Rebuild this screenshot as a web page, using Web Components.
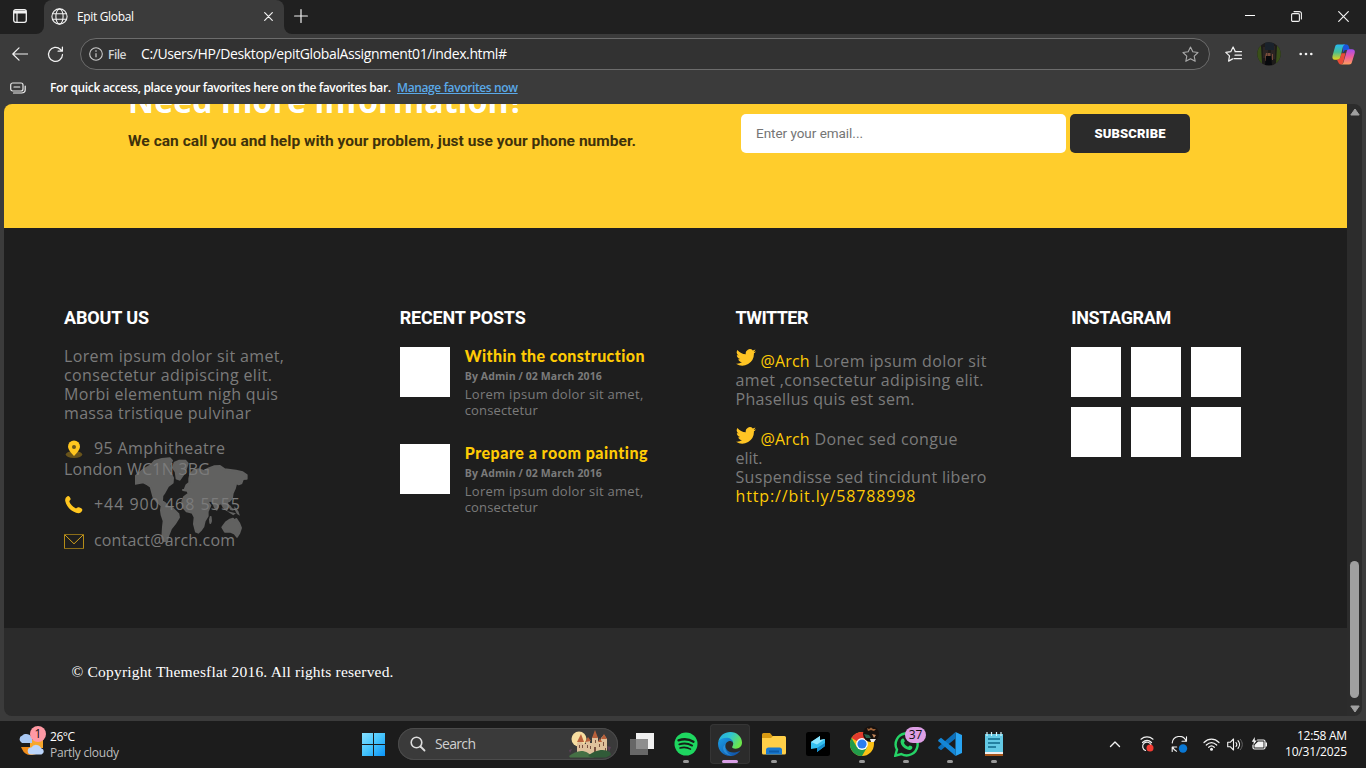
<!DOCTYPE html>
<html lang="en"><head><meta charset="utf-8"><title>Epit Global</title>
<style>html,body{margin:0;height:100%;overflow:hidden;background:#3b3b3b}body{font-family:"Open Sans","Noto Sans",sans-serif}</style></head>
<body><desktop-screen></desktop-screen>
<script>
const define=(name,html,css)=>customElements.define(name,class extends HTMLElement{
  connectedCallback(){ if(this.shadowRoot)return;
    const t=document.createElement('template');
    t.innerHTML=`<style>*{box-sizing:border-box}:host{display:block;box-sizing:border-box}${css}</style>${html}`;
    this.attachShadow({mode:'open'}).append(document.importNode(t.content,true)); }
});

/* A run of text whose tracking is set so that it spans a given width. */
customElements.define('fit-text',class extends HTMLElement{
  connectedCallback(){ if(this.shadowRoot)return;
    this.attachShadow({mode:'open'}).innerHTML='<style>:host{display:inline-block;white-space:pre;vertical-align:baseline}</style><span><slot></slot></span>';
    const s=this.shadowRoot.querySelector('span'),n=this.textContent.length,w=+this.getAttribute('w');
    s.style.letterSpacing='0';
    const ls=(w-s.getBoundingClientRect().width)/(n-1);
    s.style.letterSpacing=ls.toFixed(4)+'px'; this.style.marginRight=(-ls).toFixed(4)+'px';
  }
});

const svg=(w,h,vb,body)=>`<svg width="${w}" height="${h}" viewBox="${vb}" fill="none">${body}</svg>`;
const W='stroke="#f2f2f2" stroke-linecap="round" stroke-linejoin="round"';
const ICONS={
 workspace:svg(14,14,'0 0 14 14',`<rect x=".7" y=".7" width="12.6" height="12.6" rx="2" ${W} stroke-width="1.3"/><path d="M1 1.5h12v3H1z" fill="#f2f2f2"/><path d="M4 4v9" ${W} stroke-width="1.2"/>`),
 globe:svg(17,17,'0 0 17 17',`<g ${W} stroke-width="1.1"><circle cx="8.5" cy="8.5" r="7.6"/><ellipse cx="8.5" cy="8.5" rx="3.6" ry="7.6"/><path d="M1.6 5.8h13.8M1.6 11.2h13.8"/></g>`),
 close:svg(9,9,'0 0 9 9',`<path d="M.7.7l7.6 7.6M8.3.7L.7 8.3" ${W} stroke-width="1.2"/>`),
 plus:svg(14,14,'0 0 14 14',`<path d="M7 .6v12.8M.6 7h12.8" ${W} stroke-width="1.2"/>`),
 min:svg(10,10,'0 0 10 10',`<path d="M0 4.5h10" stroke="#fff"/>`),
 max:svg(11,11,'0 0 11 11',`<rect x=".6" y="2.6" width="7.8" height="7.8" rx="1.2" ${W} stroke-width="1.1"/><path d="M3 .6h5.4a2 2 0 0 1 2 2V8" ${W} stroke-width="1.1"/>`),
 winclose:svg(11,11,'0 0 11 11',`<path d="M.7.7l9.6 9.6M10.3.7L.7 10.3" ${W} stroke-width="1.2"/>`),
 back:svg(16,14,'0 0 16 14',`<path d="M7 .8L.8 7 7 13.2M1 7h14.5" ${W} stroke-width="1.2"/>`),
 reload:svg(17,17,'0 0 17 17',`<path d="M15.5 8.5a7 7 0 1 1-2-5l1.6 1.6M15.4 1v4.2h-4.3" ${W} stroke-width="1.25"/>`),
 info:svg(14,14,'0 0 14 14',`<circle cx="7" cy="7" r="6.3" stroke="#ccc" stroke-width="1.1"/><path d="M7 6.3v4" stroke="#ccc" stroke-width="1.2"/><circle cx="7" cy="4" r=".8" fill="#ccc"/>`),
 star:svg(17,17,'0 0 17 17',`<path d="M8.5 1l2.3 4.8 5.2.7-3.8 3.6 1 5.2-4.7-2.6-4.7 2.6 1-5.2L1 6.500l5.200-.7z" stroke="#aaa" stroke-width="1.1" stroke-linejoin="round"/>`),
 favs:svg(17,17,'0 0 17 17',`<path d="M10.300 5.5L8.100 1 5.800 5.700l-5 .7 3.700 3.500-.9 5.200 4-2.200M10 5.700h6.500M10 9.200h6.500M9 12.700h7.500" ${W} stroke-width="1.200"/>`),
 avatar:svg(24,24,'0 0 24 24',`<clipPath id="c"><circle cx="12" cy="12" r="11.700"/></clipPath><g clip-path="url(#c)"><path fill="#1d1b19" d="M0 0h24v24H0z"/><path fill="#3a5019" d="M0 4h4l1 17H0zM20 4h4v18h-5z"/><path fill="#2b2523" d="M6 5h5v11H6zM14 4h4v13h-4z"/><path fill="#1a222b" d="M8 0h9v8H8z"/><path fill="#784c3a" d="M8 15l1-4h1v8H8zM15 12h1v6h-1zM10.500 11h3v3h-3z"/><path fill="#07090c" d="M9 14h5l1 9H8z"/></g>`),
 dots:svg(14,4,'0 0 14 4',`<g fill="#f4f4f4"><circle cx="1.700" cy="2" r="1.300"/><circle cx="7" cy="2" r="1.300"/><circle cx="12.300" cy="2" r="1.300"/></g>`),
 copilot:svg(23,21,'0 0 23 21',`<defs><linearGradient id="a" x1="0" y1="0" x2="0" y2="1"><stop stop-color="#25b9f3"/><stop offset=".5" stop-color="#48bd92"/><stop offset="1" stop-color="#e8d218"/></linearGradient><linearGradient id="b" x1="0" y1="0" x2="0" y2="1"><stop stop-color="#a34cf0"/><stop offset=".5" stop-color="#ee5c9a"/><stop offset="1" stop-color="#ff9d5c"/></linearGradient></defs><path fill="#1a55dc" d="M11 .5h3.500c1.500 0 2 1 2.500 2.800l.8 2.700h-4c-2 0-2 2-3 3z"/><path fill="url(#a)" d="M5.500.5h8c-2 .3-2.500 2-3 4L8.500 13c-.6 2-1.500 2.800-3.300 2.800H3C.5 15.800 0 14 .6 11.500L3 3C3.500 1.200 4.300.5 5.500.5z"/><path fill="#e94b37" d="M5 15.800c2 0 3-1 3.500-3l1-3.500h4l-2 8c-.5 2-1 3.200-2.500 3.200-2 0-2.500-1.500-4-4.700z"/><path fill="url(#b)" d="M17 20.500H9c2-.3 2.500-2 3-4L14.500 8c.5-2 1.200-2.700 3-2.700H20c2.600 0 3.300 1.700 2.600 4.200L20 18c-.6 1.800-1.300 2.500-3 2.500z"/>`),
 favbar:svg(16,12,'0 0 16 12',`<rect x=".7" y="1" width="12.300" height="8" rx="2" stroke="#e8e8e8" stroke-width="1.200"/><path d="M4 5h5.700M3.500 11h8c2.500 0 3.700-1.200 3.700-3.200V4" ${W} stroke-width="1.200"/>`),
 up:svg(10,8,'0 0 10 8',`<path d="M5 1l4.200 6H.8z" fill="#a0a0a0" stroke="#a0a0a0" stroke-linejoin="round"/>`),
 down:svg(10,8,'0 0 10 8',`<path d="M5 7L.8 1h8.400z" fill="#a0a0a0" stroke="#a0a0a0" stroke-linejoin="round"/>`),
 pin:svg(20,20,'0 0 20 20',`<ellipse cx="10" cy="14.500" rx="8.300" ry="3.500" fill="#69541b"/><path d="M10 16S4 10.500 4 6.500a6 6 0 0 1 12 0C16 10.500 10 16 10 16z" fill="#ffc61f"/><circle cx="10" cy="7" r="2" fill="#69541b"/>`),
 phone:svg(20,20,'0 0 20 20',`<path d="M3.500 1.200c1.200-.8 2.200.3 3 2.300.7 1.700-1.700 2-1 3.600 1 2.300 3 4.500 5.700 6 1.500.8 2-1.500 3.700-.8 1.800.7 3.800 1.600 3.400 3-.8 2.800-3.800 3.400-6.300 2.400C6.300 15.500 2.500 11.500 1.300 6.300.8 4 1.800 2 3.500 1.200z" fill="#ffc61f"/>`),
 mail:svg(20,15,'0 0 20 15',`<path d="M.5.500h19v14H.5z" stroke="#b58c18"/><path d="M.5 14.500h19M.5.500h19" stroke="#8b6d18"/><path d="M1 1l9 8.800L19 1" stroke="#d1a11c"/>`),
 bird:svg(20,17,'0 0 24 20',`<path fill="#ffc524" d="M24 2.400a9.800 9.800 0 0 1-2.800.8A5 5 0 0 0 23.300.500a9.900 9.900 0 0 1-3.100 1.200 4.900 4.900 0 0 0-8.400 4.500A14 14 0 0 1 1.700 1a4.900 4.900 0 0 0 1.500 6.600A4.900 4.900 0 0 1 1 7c0 2.300 1.600 4.400 3.900 4.900a5 5 0 0 1-2.200.1 4.900 4.900 0 0 0 4.600 3.400A9.900 9.900 0 0 1 0 17.500 14 14 0 0 0 21.500 5c1-.7 1.800-1.600 2.500-2.600z"/>`),
 map:svg(113.300,85,'255 500 340 255',`<g fill="#616160" stroke="#616160" stroke-width="6" stroke-linejoin="round"><path d="M258 556l24-20 20-11 12-13 22-6 24-2 6 7-7 15 2 13-13 8 13-1 8 17-1 14-14 11-10 18-7 10-1 16 10 7 10 13 13 3 16 16 2 10-12 19-12 15-8 20-4 17-9 5-5-14 2-33 2-18-6-18-2-14 2-14-14-12-10-12-5-18-4-15-10-7-12-6-24 4z"/><path d="M374 517l14-6 18 0 7 8-5 16-9 19-10 14-9-3-3-21-8-12z"/><path d="M404 598l5-13 9-8 0-12 3-14 12-12 14-2 14 5 15-8 16-6 18-1 14 10 34 4 20 5 12 8 0 11-11 1-5 13-8 3-7-5-4 16-7 16-2 14-8 9-7 2 2 13-3 12-9-8-6-12-9 2-6 17-6-9-4-13-9-5-8 3 8 12-8 18 0 13-9 15-4 17-8 11-7 7-7-3-6-23 2-20-7-14-17-4-11-13-2-17 5-13 14-10-4-9-13-2z"/><path d="M482 680l1 12-2 6-1-10zM517 711l11-15 12-8 9-3 5 6 5-5 8 12 6 15-5 15-7 11-7-9-13-6-16 0z"/></g><g fill="#616160"><path d="M530 638l12 8 9 15-10-2zM553 648l12 14 5 14-9-5-7-13zM530 662l28 7-8 6z"/></g>`),
 weather:svg(30,28,'0 0 30 28',`<path d="M3 17h20a10 10 0 0 1-19 2z" fill="#ef8b18"/><path d="M12 10h13v8H12z" fill="#f7a72c"/><path d="M4 13a4 4 0 0 1 .3-7.500A6 6 0 0 1 14 8v5z" fill="#a9c8f4"/><path d="M13 24.500a3.500 3.500 0 0 1 .4-7 5.500 5.500 0 0 1 9.800.8 3.200 3.200 0 0 1 .3 6.200z" fill="#bcd5fa"/>`),
 start:svg(23,23,'0 0 23 23',`<defs><linearGradient id="w" gradientUnits="userSpaceOnUse" x1="0" y1="0" x2="23" y2="23"><stop stop-color="#86e0ff"/><stop offset=".5" stop-color="#45c4fc"/><stop offset="1" stop-color="#0a93f8"/></linearGradient></defs><path fill="url(#w)" d="M0 0h11v11H0zM12 0h11v11H12zM0 12h11v11H0zM12 12h11v11H12z"/>`),
 search:svg(16,16,'0 0 16 16',`<circle cx="6.500" cy="6.500" r="5.300" stroke="#ddd" stroke-width="1.600"/><path d="M10.500 10.500l4 4" stroke="#ddd" stroke-width="1.800" stroke-linecap="round"/>`),
 castle:svg(44,28,'0 0 44 28',`<circle cx="11" cy="9" r="7.500" fill="#f6dda0"/><path fill="#dfc19c" d="M9 24V13l3-2 3 2v1h3v-3h4v2h2V8l3-4 3 4v3h3V8l3-3 3 4v16z"/><path fill="#b9603a" d="M9 12l4-8 3 8zM24 8l3-8 3 8zM33 9l3-5 3 5zM17 12l3-5 3 4zM30 12l2-4 2 4z"/><path fill="#7a5140" d="M11 15h1v3h-1zM14 15h1v3h-1zM19 15h1v3h-1zM22 16h1v3h-1zM27 10h1v3h-1zM31 14h1v3h-1zM35 12h1v4h-1zM26 17h2v5h-2zM37 18h1v3h-1z"/><path fill="#457045" d="M1 26c6-4 12-7 19-3l6 4.500H2z"/><path fill="#315b38" d="M20 26c6-6 16-8 22-4l1 3-5 2.500H24z"/><path fill="#5b4058" d="M1 20l3-1-2 4zM39 16l4 1-2 5z"/>`),
 tasks:svg(24,23,'0 0 24 23',`<path d="M6 0h18v16H6z" fill="#f0f0f0"/><path d="M0 6h18v16H0z" fill="#777" opacity=".82"/>`),
 spotify:svg(24,24,'0 0 24 24',`<circle cx="12" cy="12" r="11.500" fill="#1ed760"/><g stroke="#162019" stroke-linecap="round"><path d="M4.500 8.300c5-1.600 11-1 15 1.400" stroke-width="2.300"/><path d="M5.300 12.300c4.300-1.300 9.300-.8 12.800 1.300" stroke-width="1.900"/><path d="M6 16c3.700-1.100 7.500-.6 10.500 1.200" stroke-width="1.500"/></g>`),
 edge:svg(24,24,'0 0 24 24',`<defs><linearGradient id="e" x1="0" y1="0" x2="1" y2=".5"><stop stop-color="#22a6e5"/><stop offset=".5" stop-color="#31c6cf"/><stop offset="1" stop-color="#6be54b"/></linearGradient><linearGradient id="f" x1="0" y1="0" x2="1" y2="1"><stop stop-color="#1b9de4"/><stop offset="1" stop-color="#0f4ba2"/></linearGradient></defs><path d="M.2 10C1.500 3.500 6.500 0 12.300 0 19 0 24 5 24 10.500c0 4-3 6.200-6.200 6.200-3 0-4.300-1.200-3.400-2.400 1.800-2.500.8-6.700-4.400-6.700-4 0-8 0-9.800 2.400z" fill="url(#e)"/><path d="M.2 10C1.700 7 5 5.700 8.500 5.700c3.500 0 6.500 2 6.700 5.300-1-1.700-3-2.300-4.600-1.700-3 1-4.300 4.700-2.200 8 2.600 4 9 4.200 13.900 1.200-2 3.500-6 5.500-10.300 5.500C5 24-1 18 .2 10z" fill="url(#f)"/><path d="M7.500 12c-1.500 4 1 10 6.500 11.500-7 .3-10-5.500-8.500-9z" fill="#3aa5ec" opacity=".5"/>`),
 folder:svg(24,24,'0 0 24 24',`<path d="M0 2.500Q0 1 1.500 1H8l2.500 3H22v5H0z" fill="#d89a12"/><path d="M0 6h9l2-2h11.500Q24 4 24 5.500V21q0 1.500-1.500 1.500h-21Q0 22.500 0 21z" fill="#ffcf48"/><path d="M4 22.500V18q0-2.500 2.500-2.500h11q2.500 0 2.500 2.500v4.500z" fill="#1979cf"/><path d="M7 18.500h10v2H7z" fill="#0b5ba9"/>`),
 prism:svg(24,24,'0 0 24 24',`<rect width="24" height="24" rx="2.500" fill="#000"/><path d="M5 10l9-6v4l5-1v7l-8 6v-4l-6 1z" fill="#35bff0"/><path d="M5 10l9-6v4l5-1-8 5.500z" fill="#8ee6ff"/><path d="M11 16l8-5v3l-8 6z" fill="#158dcb"/>`),
 chrome:svg(30,30,'0 0 30 30',`<circle cx="12" cy="18" r="12" fill="#fbc116"/><path d="M12 18L1.600 12A12 12 0 0 1 22.400 12z" fill="#e33b2e"/><path d="M12 18l-5.200 3L1.600 12A12 12 0 0 0 12 30l5.200-9z" fill="#229b4a"/><circle cx="12" cy="18" r="5.900" fill="#fff"/><circle cx="12" cy="18" r="4.600" fill="#2a7cef"/><circle cx="21" cy="8" r="8" fill="#17110e"/><path d="M17 2l2 1 2-1.500 2 1.500 3 0-2 2-3-1-3 1z" fill="#a16438"/><path d="M14 8l5 1 2 3-5 0z" fill="#2b624d"/><path d="M20 13l6 0-2 3h-3z" fill="#eee"/><path d="M22 8l4 1-2 3z" fill="#c88a5d"/>`),
 whatsapp:svg(25,25,'0 0 25 25',`<path d="M1.300 23.700l1.700-6A11 11 0 1 1 7.300 22z" stroke="#25d366" stroke-width="2.400"/><path d="M8.500 6.500c1.300-.4 1.500.2 2.300 2.500.2.800-1 1.500-.8 2 .8 1.800 2.200 3 4 3.800.6.200 1.200-1.400 1.900-1.200 2.200.9 2.700 1.300 2.400 2.300-.7 2-2.800 2.400-5 1.700C9.500 16.300 7 13.500 6.600 10.300 6.500 8.500 7.200 7 8.500 6.500z" fill="#25d366"/>`),
 vscode:svg(24,24,'0 0 24 24',`<path d="M17.500 0L24 3v18l-6.500 3z" fill="#28a4f2"/><path d="M17.500 0v6.500L3 18.200l-2.500-2q-.7-.7 0-1.400z" fill="#0c6fba"/><path d="M17.500 24v-6.500L3 5.800l-2.500 2q-.7.700 0 1.400z" fill="#1486d6"/>`),
 notepad:svg(18,24,'0 0 18 24',`<path d="M0 2h18v20H0z" fill="#63c9e4"/><path d="M0 20h18v2H0z" fill="#eee"/><path d="M0 22h18v2H0z" fill="#a75519"/><path d="M2 0v4M6.500 0v4M11.500 0v4M16 0v4" stroke="#d6f4fb" stroke-width="1.200"/><path d="M3 7h12M3 11h12M3 15h8" stroke="#11698b" stroke-width="1.600"/>`),
 chevron:svg(12,8,'0 0 12 8',`<path d="M1.500 6.500L6 2l4.500 4.500" ${W} stroke-width="1.400"/>`),
 cast:svg(16,16,'0 0 16 16',`<path d="M2 3.200c3.500-3 8.500-3 12 0M3.500 6.500c2.700-2.500 6.300-2.500 9 0M6.500 14.500A4.300 4.300 0 1 1 12 9" ${W} stroke-width="1.200"/><circle cx="11" cy="12" r="3.500" fill="#f23b32"/>`),
 sync:svg(17,17,'0 0 17 17',`<path d="M1.200 7A7.200 7.200 0 0 1 15 4.800M15.500.8v4.500H11M5.500 15.200A7 7 0 0 1 1.700 11M1.200 15.500V11h4.500" ${W} stroke-width="1.100"/><circle cx="12" cy="12.500" r="4.200" fill="#0a78d4"/>`),
 wifi:svg(17,13,'0 0 17 13',`<path d="M1 4.500c4.500-4.400 10.500-4.400 15 0M3.300 7c3.200-3 7.200-3 10.400 0M5.700 9.300c1.700-1.600 3.900-1.600 5.600 0" ${W} stroke-width="1.200"/><circle cx="8.500" cy="11.200" r="1.500" fill="#f2f2f2"/>`),
 sound:svg(16,13,'0 0 16 13',`<path d="M.7 4.300h2.500L6.500 1v11L3.200 8.700H.7zM9 4.500c1 1.200 1 2.800 0 4M11 2.700c2 2.300 2 5.300 0 7.600" ${W} stroke-width="1.100"/><path d="M13 1c3 3.300 3 7.700 0 11" stroke="#666"/>`),
 battery:svg(17,14,'0 0 17 14',`<path d="M6.500 3H12.500q1.500 0 1.500 1.500v6Q14 12 12.500 12H3.500Q2 12 2 10.500V8" ${W} stroke-width="1.200"/><path d="M3.500 10.500V8L7 4.500h5.500v6zM14.500 5.500H16v4h-1.500z" fill="#f2f2f2"/><path d="M3.700 0L.8 4.700h2L2.300 8 5.800 3.500h-2z" fill="#f2f2f2"/>`)
};
customElements.define('ui-icon',class extends HTMLElement{
  connectedCallback(){ if(!this.shadowRoot) this.attachShadow({mode:'open'}).innerHTML='<style>:host{display:inline-block;flex:none}svg{display:block}</style>'+ICONS[this.getAttribute('name')]; }
});

define('tab-strip',`<div class="ws"><ui-icon name="workspace"></ui-icon></div>
<div class="tab"><ui-icon name="globe"></ui-icon><span><fit-text w="57">Epit Global</fit-text></span><ui-icon name="close"></ui-icon></div>
<div class="rest"><ui-icon name="plus"></ui-icon><div class="win"><ui-icon name="min"></ui-icon><ui-icon name="max"></ui-icon><ui-icon name="winclose"></ui-icon></div></div>`,
`:host{display:flex;height:34px;background:linear-gradient(#202020 12px,#3b3b3b 12px)}.ws{width:44px;background:#202020;border-radius:0 0 8px 0;padding:9px 0 0 13px;line-height:0}
.tab{width:240px;display:flex;align-items:center;padding:0 11px 2px 7px;border-radius:8px 8px 0 0;background:#3b3b3b;color:#fff;font-size:12px}
.tab span{flex:1;padding-left:9px}.rest{flex:1;background:#202020;border-radius:0 0 0 8px;display:flex;justify-content:space-between;padding:9px 17px 0 10px}
.win{display:flex;gap:36px;padding-top:2px}`);

define('address-bar',`<ui-icon name="back"></ui-icon><ui-icon name="reload" class="r"></ui-icon>
<div class="pill"><ui-icon name="info"></ui-icon><b><fit-text w="18.500">File</fit-text></b><span><fit-text w="366">C:/Users/HP/Desktop/epitGlobalAssignment01/index.html#</fit-text></span><ui-icon name="star"></ui-icon></div>
<ui-icon name="favs" class="f"></ui-icon><ui-icon name="avatar" class="a"></ui-icon><ui-icon name="dots" class="d"></ui-icon><ui-icon name="copilot" class="c"></ui-icon>`,
`:host{display:flex;align-items:center;height:40px;padding-left:12px;background:#3b3b3b}.r{margin:0 17px 0 19px}
.pill{width:1130px;height:32px;margin-left:-1px;border:1px solid #6c6c6c;border-radius:16px;background:#323232;display:flex;align-items:center;padding:0 10px 0 8px;color:#fff;font-size:14px}
b{font-size:12px;font-weight:600;color:#d4d4d4;padding:0 0 0 5px;width:38px}span{flex:1;position:relative;padding:0 0 1px}
.f{margin-left:15px}.a{margin-left:15px}.d{margin-left:18px}.c{margin-left:19px}`);

define('favorites-bar',`<ui-icon name="favbar"></ui-icon><span><fit-text w="341">For quick access, place your favorites here on the favorites bar.</fit-text></span><a><fit-text w="121">Manage favorites now</fit-text></a>`,
`:host{display:flex;align-items:center;height:30px;padding:0 0 3px 10px;font:600 12px "Open Sans",sans-serif;color:#fff;background:#3b3b3b}span{padding-left:24px}a{padding-left:6px;color:#5aa9e8}a fit-text{text-decoration:underline}`);

define('call-to-action',`<div class="txt"><h2><fit-text w="396">Need more information?</fit-text></h2><p><fit-text w="508">We can call you and help with your problem, just use your phone number.</fit-text></p></div>
<div class="in"><fit-text w="107">Enter your email...</fit-text></div><div class="btn"><fit-text w="71">SUBSCRIBE</fit-text></div>`,
`:host{display:flex;height:124px;background:#ffcd2c;overflow:hidden;padding-left:124px}
.txt{width:613px}h2{margin:-27px 0 0;font:700 32px/48px "Open Sans",sans-serif;color:#fff;height:48px}
p{margin:5px 0 0;font:700 15.500px/22px Roboto,sans-serif;color:#3f320b}
.in{margin-top:10px;width:325px;height:39px;border-radius:5px;background:#fff;color:#757575;font:13.500px/39px Roboto,sans-serif;padding-left:15px}
.btn{margin:10px 0 0 4px;width:120px;height:39px;border-radius:5px;background:#2b2b2b;color:#fff;font:900 13px/39px Roboto,sans-serif;text-align:center}`);

define('footer-column',`<h3><slot name="title"></slot></h3><slot></slot>`,
`:host{position:relative;padding-left:60px;min-width:0}h3{margin:0 0 19px;height:20px;font:700 18px/20px Roboto,sans-serif;color:#fff}`);

define('about-panel',`<ui-icon name="map" class="map"></ui-icon><div class="body">
<div><fit-text w="220">Lorem ipsum dolor sit amet,</fit-text></div><div><fit-text w="208">consectetur adipiscing elit.</fit-text></div><div><fit-text w="214">Morbi elementum nigh quis</fit-text></div><div><fit-text w="187">massa tristique pulvinar</fit-text></div>
<div class="row a"><ui-icon name="pin"></ui-icon><fit-text w="131">95 Amphitheatre</fit-text></div><div class="l"><fit-text w="146">London WC1N 3BG</fit-text></div>
<div class="row p"><ui-icon name="phone"></ui-icon><fit-text w="146">+44 900 468 5555</fit-text></div><div class="row m"><ui-icon name="mail"></ui-icon><fit-text w="141">contact@arch.com</fit-text></div></div>`,
`:host{position:relative;font:16px/19px "Open Sans",sans-serif;color:#7b7b7b}.body{position:relative}.map{position:absolute;left:71px;top:110px;filter:blur(.5px)}
.row{display:flex;gap:10px;line-height:20px;height:20px}.a{margin-top:15px}.a ui-icon{padding-top:2px}.l{line-height:21px}.p{margin-top:14px}.m{margin-top:16px}.p ui-icon{margin-top:1px}.m ui-icon{padding-top:4px}.a{height:21px}`);

define('recent-post',`<div class="thumb"></div><div><h4><slot></slot></h4><p class="meta"><fit-text w="137">By Admin / 02 March 2016</fit-text></p><p><fit-text w="178.500">Lorem ipsum dolor sit amet,</fit-text></p><p><fit-text w="73">consectetur</fit-text></p></div>`,
`:host{display:flex;gap:15px;height:97px}.thumb{width:50px;height:50px;background:#fff}h4{margin:-1px 0 1px;font:900 16px/20px Lato,sans-serif;color:#ffcb05;height:20px}
p{margin:0;font:13px/16px "Open Sans",sans-serif;color:#7b7b7b}.meta{font:700 10.500px/16px "Open Sans",sans-serif;height:19px;padding-top:1px}`);

define('tweet-list',`<div class="top"><ui-icon name="bird"></ui-icon><a><fit-text w="49">@Arch</fit-text></a><fit-text w="172">Lorem ipsum dolor sit</fit-text></div>
<div><fit-text w="248">amet ,consectetur adipising elit.</fit-text></div><div><fit-text w="179">Phasellus quis est sem.</fit-text></div>
<div class="top t2"><ui-icon name="bird"></ui-icon><a><fit-text w="49">@Arch</fit-text></a><fit-text w="143">Donec sed congue</fit-text></div>
<div><fit-text w="27">elit.</fit-text></div><div><fit-text w="251">Suspendisse sed tincidunt libero</fit-text></div><div><a><fit-text w="180">http://bit.ly/58788998</fit-text></a></div>`,
`:host{font:16px/19px "Open Sans",sans-serif;color:#7b7b7b}.top{display:flex;gap:5px;padding-top:5px;height:24px}.top ui-icon{margin-top:-3px}.t2{margin-top:16px}a{color:#ffcb05}`);

define('photo-grid',`<i></i><i></i><i></i><i></i><i></i><i></i>`,`:host{display:grid;grid-template-columns:repeat(3,50px);gap:10px}i{height:50px;background:#fff}`);

define('site-footer',`<div class="cols">
<footer-column><fit-text slot="title" w="85">ABOUT US</fit-text><about-panel></about-panel></footer-column>
<footer-column><fit-text slot="title" w="126">RECENT POSTS</fit-text><recent-post><fit-text w="180">Within the construction</fit-text></recent-post><recent-post><fit-text w="183">Prepare a room painting</fit-text></recent-post></footer-column>
<footer-column><fit-text slot="title" w="73">TWITTER</fit-text><tweet-list></tweet-list></footer-column>
<footer-column><fit-text slot="title" w="100">INSTAGRAM</fit-text><photo-grid></photo-grid></footer-column></div>
<div class="copy"><fit-text w="322">© Copyright Themesflat 2016. All rights reserved.</fit-text></div>`,
`.cols{display:grid;grid-template-columns:repeat(4,1fr);height:400px;padding-top:80px;background:#1e1e1e}.copy{height:88px;background:#2b2b2b;padding:34px 0 0 67.500px;font:15.500px/20px "Liberation Serif",serif;color:#fff}`);

define('scroll-bar',`<ui-icon name="up"></ui-icon><div></div><ui-icon name="down"></ui-icon>`,
`:host{width:15px;background:#2c2c2c;display:flex;flex-direction:column;align-items:center;padding:4px 0 3px}div{width:9px;height:137px;border-radius:5px;background:#a0a0a0;margin:auto 0 7px}`);

define('task-button',`<slot></slot><b></b>`,`:host{position:relative;width:40px;height:40px;display:flex;align-items:center;justify-content:center;border-radius:4px;flex:none}
b{display:none}:host([run]) b{display:block;position:absolute;bottom:1px;left:17px;width:6px;height:3px;border-radius:2px;background:#999}
:host([active]){background:#2b2b2b;box-shadow:inset 0 0 0 1px #353535}:host([active]) b{left:12px;width:16px;background:#d99fe6}
::slotted(span){position:absolute;left:19px;top:3px;width:21px;height:16px;border-radius:8px;background:#dd9fe5;color:#111;font:12px/16px "Open Sans",sans-serif;text-align:center}`);

define('task-bar',`<div class="weather"><div class="wi"><ui-icon name="weather"></ui-icon><i>1</i></div><div class="wt"><div><fit-text w="25">26°C</fit-text></div><div class="g"><fit-text w="69">Partly cloudy</fit-text></div></div></div>
<div class="mid"><task-button><ui-icon name="start"></ui-icon></task-button><div class="search"><ui-icon name="search"></ui-icon><span><fit-text w="41">Search</fit-text></span><ui-icon name="castle"></ui-icon></div>
<task-button><ui-icon name="tasks"></ui-icon></task-button><task-button run><ui-icon name="spotify"></ui-icon></task-button><task-button run active><ui-icon name="edge"></ui-icon></task-button><task-button run><ui-icon name="folder"></ui-icon></task-button><task-button><ui-icon name="prism"></ui-icon></task-button><task-button run><ui-icon name="chrome" class="ch"></ui-icon></task-button><task-button run><ui-icon name="whatsapp"></ui-icon><span>37</span></task-button><task-button run><ui-icon name="vscode"></ui-icon></task-button><task-button run><ui-icon name="notepad"></ui-icon></task-button></div>
<div class="tray"><ui-icon name="chevron"></ui-icon><ui-icon name="cast" class="k"></ui-icon><ui-icon name="sync" class="s"></ui-icon><ui-icon name="wifi" class="w"></ui-icon><ui-icon name="sound" class="o"></ui-icon><ui-icon name="battery" class="b"></ui-icon></div>
<div class="clock"><div><fit-text w="50">12:58 AM</fit-text></div><div><fit-text w="62">10/31/2025</fit-text></div></div>`,
`:host{display:grid;grid-template-columns:353px 1fr auto 81px;height:47px;padding-bottom:1px;background:#1c1c1c;color:#fff;font:12px/16px "Open Sans",sans-serif;align-items:center}
.weather{display:flex;padding-left:18px;gap:2px}.wi{position:relative;padding-top:3px}.wt{padding-top:2px}i{position:absolute;left:12px;top:-1px;width:16px;height:16px;border-radius:8px;background:#ff99a4;color:#111;font-style:normal;text-align:center}.g{color:#bebebe}
.mid{display:flex;gap:4px;align-items:center}.search{width:220px;height:32px;margin-left:1px;border-radius:16px;background:#3a3a3a;box-shadow:inset 0 0 0 1px #4b4b4b;display:flex;align-items:center;padding:0 6px 0 12px;font-size:14px;color:#d0d0d0}.search span{flex:1;padding-left:9px}.ch{margin:-6px 0 0 6px}
.tray{display:flex;align-items:center;margin-right:17px}.k{margin-left:18px}.s{margin-left:16px}.w{margin-left:15px}.o{margin-left:7px}.b{margin-left:8px}.clock{text-align:right;padding-right:19px}`);

define('desktop-screen',`<tab-strip></tab-strip><address-bar></address-bar><favorites-bar></favorites-bar>
<div class="view"><div class="page"><call-to-action></call-to-action><site-footer></site-footer></div><scroll-bar></scroll-bar></div><task-bar></task-bar>`,
`:host{width:1366px;height:768px;overflow:hidden;background:#3b3b3b}.view{display:flex;height:612px;margin:0 4px 5px;border-radius:8px;overflow:hidden}.page{width:1343px}`);
</script></body></html>
